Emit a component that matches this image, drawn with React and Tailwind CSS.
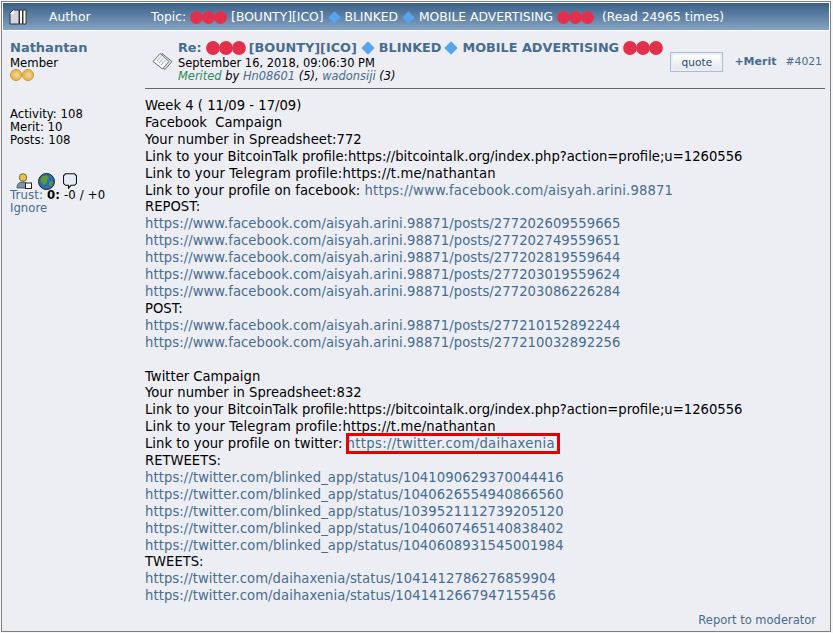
const Dots = ({ size = 14, className = "" }) => (
  <span className={`inline-flex ${className}`}>
    {[0, 1, 2].map((i) => (
      <svg key={i} width={size} height={size} viewBox="0 0 14 14" className={i ? "ml-[-1px]" : ""}>
        <circle cx="7" cy="7" r="6.9" fill="#e2304c" />
      </svg>
    ))}
  </span>
);

const Diamond = ({ size = 14, className = "" }) => (
  <svg width={size} height={size} viewBox="0 0 14 14" className={`inline-block ${className}`}>
    <path d="M7 .3 13.700 7 7 13.700.3 7Z" fill="#55a4ec" />
  </svg>
);

const Link = ({ children, className = "" }) => <a className={`text-[#476c8e] ${className}`}>{children}</a>;

const Coin = () => (
  <svg width="12" height="12" viewBox="0 0 12 12">
    <circle cx="6" cy="6" r="5.5" fill="#e8bb58" stroke="#c9963a" />
    <circle cx="6.500" cy="6" r="2.8" fill="#f0cf7f" />
  </svg>
);

const FB = "tracking-[0.06px]";
const RT = "tracking-[0.086px]";
const TW = "tracking-[0.07px]";

const body = [
  ["t", "Week 4 ( 11/09 - 17/09)"],
  ["t", "Facebook  Campaign"],
  ["t", "Your number in Spreadsheet:772"],
  ["t", "Link to your BitcoinTalk profile:https://bitcointalk.org/index.php?action=profile;u=1260556"],
  ["g", "Link to your Telegram profile:https://t.me/nathantan"],
  ["m", "Link to your profile on facebook: ", "https://www.facebook.com/aisyah.arini.98871"],
  ["t", "REPOST:"],
  ["l", "https://www.facebook.com/aisyah.arini.98871/posts/277202609559665", FB],
  ["l", "https://www.facebook.com/aisyah.arini.98871/posts/277202749559651", FB],
  ["l", "https://www.facebook.com/aisyah.arini.98871/posts/277202819559644", FB],
  ["l", "https://www.facebook.com/aisyah.arini.98871/posts/277203019559624", FB],
  ["l", "https://www.facebook.com/aisyah.arini.98871/posts/277203086226284", FB],
  ["t", "POST:"],
  ["l", "https://www.facebook.com/aisyah.arini.98871/posts/277210152892244", FB],
  ["l", "https://www.facebook.com/aisyah.arini.98871/posts/277210032892256", FB],
  ["t", "\u00a0"],
  ["t", "Twitter Campaign"],
  ["t", "Your number in Spreadsheet:832"],
  ["t", "Link to your BitcoinTalk profile:https://bitcointalk.org/index.php?action=profile;u=1260556"],
  ["g", "Link to your Telegram profile:https://t.me/nathantan"],
  ["b", "Link to your profile on twitter: ", "https://twitter.com/daihaxenia"],
  ["t", "RETWEETS:"],
  ["l", "https://twitter.com/blinked_app/status/1041090629370044416", RT],
  ["l", "https://twitter.com/blinked_app/status/1040626554940866560", RT],
  ["l", "https://twitter.com/blinked_app/status/1039521112739205120", RT],
  ["l", "https://twitter.com/blinked_app/status/1040607465140838402", RT],
  ["l", "https://twitter.com/blinked_app/status/1040608931545001984", RT],
  ["t", "TWEETS:"],
  ["l", "https://twitter.com/daihaxenia/status/1041412786276859904", TW],
  ["l", "https://twitter.com/daihaxenia/status/1041412667947155456", TW],
];

const Line = ({ row }) => {
  const [kind, a, b] = row;
  if (kind === "l") return <div><Link className={b}>{a}</Link></div>;
  if (kind === "g") return <div className="tracking-[0.15px]">{a}</div>;
  if (kind === "m")
    return (
      <div className="tracking-[0.06px]">
        {a}
        <Link className="tracking-[0.16px]">{b}</Link>
      </div>
    );
  if (kind === "b")
    return (
      <div className="relative tracking-[0.03px]">
        {a}
        <Link className="tracking-[0.33px]">{b}</Link>
        <span className="absolute left-[201px] top-[-3px] w-[214px] h-[21px] border-[3px] border-[#e80000]" />
      </div>
    );
  return <div className="whitespace-pre">{a}</div>;
};

export default function App() {
  return (
    <div className="w-[833px] h-[633px] bg-[#f7f7f7] pl-[1px] pt-[1px] pr-[2px] pb-[1px] font-['DejaVu_Sans',sans-serif] text-black">
      <div className="h-full bg-[#eceef4] border border-[#808080] overflow-hidden flex flex-col">
        <div className="border border-white h-[29px] pt-[2px] shrink-0 bg-gradient-to-b from-[#3a6088] to-[#86a3c2] text-white text-[12.35px] flex items-center pl-[6px]">
          <svg width="18" height="16" viewBox="0 0 18 16" className="mr-[22px] mt-[-1px]">
            <path d="M1 4 4 1h6v14H1Z" fill="#d5d4e4" stroke="#333" />
            <path d="M1.500 4.500h3v-3" fill="#fff" stroke="#fff" />
            <path d="M10.500 1h3v14h-3zM14 1h3v14h-3z" fill="#fff" stroke="#333" />
          </svg>
          <span className="w-[102px]">Author</span>
          <span className="flex items-center whitespace-pre">
            Topic: <Dots size={13} /> [BOUNTY][ICO] <Diamond size={13} /> BLINKED <Diamond size={13} /> MOBILE ADVERTISING <Dots size={13} />  (Read 24965 times)
          </span>
        </div>
        <div className="flex flex-1 pt-[9px]">
          <div className="w-[143px] pl-[8px] shrink-0 text-[11.7px] leading-[13px]">
            <div className="font-bold text-[13px] leading-[16px] text-[#476c8e]">Nathantan</div>
            <div className="mt-[1px]">Member</div>
            <div className="flex mt-[-1px]">
              <Coin />
              <Coin />
            </div>
            <div className="mt-[27px]">Activity: 108</div>
            <div>Merit: 10</div>
            <div>Posts: 108</div>
            <div className="flex items-center mt-[26px] pl-[6px] h-[16px]">
              <svg width="16" height="16" viewBox="0 0 16 16">
                <circle cx="7" cy="4.500" r="3.800" fill="#e8c14a" stroke="#444" strokeWidth=".7" />
                <path d="M1 15c0-5 3-6 6-6s4 1 4 2v4Z" fill="#7d93ad" stroke="#333" strokeWidth=".7" />
                <rect x="9.500" y="10" width="6" height="5.500" fill="#fff" stroke="#222" />
              </svg>
              <svg width="17" height="17" viewBox="0 0 17 17" className="ml-[6px]">
                <circle cx="8.500" cy="8.500" r="8" fill="#2f6ea8" stroke="#222" />
                <path d="M3 5c2-3 6-3 7-1s-1 2-1 4-3 5-4 3-3-3-2-6Zm9 3 3 1-2 5-2-2Z" fill="#5c9a3d" />
              </svg>
              <svg width="14" height="16" viewBox="0 0 14 16" className="ml-[8px]">
                <path d="M2.500.8h9l2 2v7.500l-2 2H8l-2.500 3v-3h-3l-2-2V2.800Z" fill="#e6edf4" stroke="#111" strokeWidth="1.100" />
              </svg>
            </div>
            <div className="tracking-[0.15px]"><span className="text-[#476c8e]">Trust:</span> <b>0:</b> -0 / +0</div>
            <div className="text-[#476c8e]">Ignore</div>
          </div>
          <div className="flex-1 min-w-0 pr-[5px] flex flex-col">
            <div className="flex border-b border-[#666] h-[49px] pr-[3px]">
              <svg width="21" height="19" viewBox="0 0 21 19" className="ml-[7px] mr-[5px] mt-[12px] shrink-0">
                <path d="M10 1.500 20 9.500 13 17.500 9 15Z" fill="#dfe3ea" stroke="#6b7280" />
                <path d="M1 9.500 8 1.500l9 8-6.500 7.500Z" fill="#f4f6fa" stroke="#6b7280" />
                <path d="M5 9 9 4.500M7 11l4-4.500M9 13l4-4.500" stroke="#99aabb" fill="none" />
              </svg>
              <div className="flex-1 min-w-0 text-[11.45px] leading-[13px] whitespace-nowrap">
                <div className="font-bold text-[12.8px] leading-[16px] text-[#476c8e] flex items-center">
                  <span>Re:</span>
                  <Dots className="ml-[4px]" />
                  <span className="ml-[3px]">[BOUNTY][ICO]</span>
                  <Diamond className="ml-[4px]" />
                  <span className="ml-[4px]">BLINKED</span>
                  <Diamond className="ml-[3px]" />
                  <span className="ml-[4px]">MOBILE ADVERTISING</span>
                  <Dots className="ml-[4px]" />
                </div>
                <div className="mt-[1px]">September 16, 2018, 09:06:30 PM</div>
                <div className="italic">
                  <span className="text-[#2e8b57]">Merited</span> by <span className="text-[#476c8e]">Hn08601</span> (5), <span className="text-[#476c8e]">wadonsiji</span> (3)
                </div>
              </div>
              <div className="flex items-center text-[11px] mt-[12px] self-start">
                <span className="border border-[#a9bdd6] p-[2px]">
                  <span className="block w-[47px] h-[14px] bg-gradient-to-b from-white to-[#e2e8f0] text-center leading-[14px] text-[10.6px] text-[#2e4a6b]">quote</span>
                </span>
                <span className="font-bold text-[#476c8e] ml-[11px]">+Merit</span>
                <span className="text-[#476c8e] text-[10.8px] ml-[9px]">#4021</span>
              </div>
            </div>
            <div className="pt-[9px] text-[13.18px] leading-[16.9px] whitespace-nowrap">
              {body.map((row, i) => (
                <Line key={i} row={row} />
              ))}
            </div>
            <div className="text-right text-[11.5px] text-[#476c8e] mt-[7px] pr-[9px]">Report to moderator</div>
          </div>
        </div>
      </div>
    </div>
  );
}
